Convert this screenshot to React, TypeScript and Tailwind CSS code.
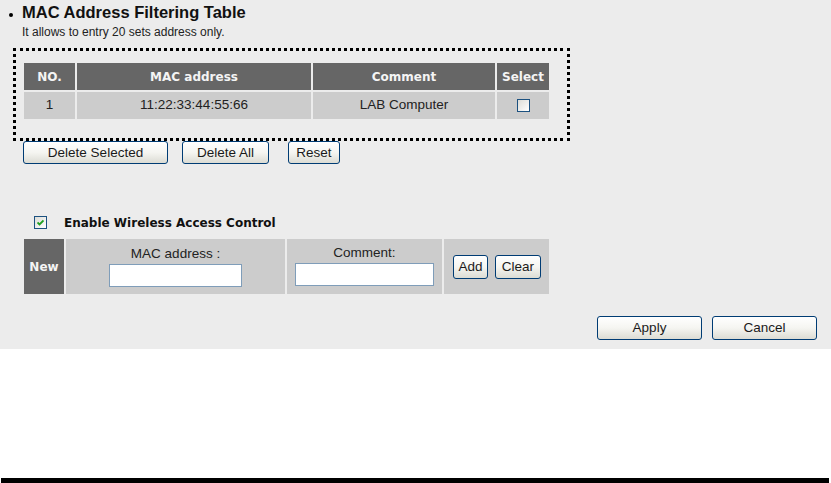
import React from "react";

const sans = "font-['Liberation_Sans',Arial,sans-serif]";
const bold = "font-['DejaVu_Sans',Verdana,sans-serif] font-bold";

function XpButton({ label, className }: { label: string; className: string }) {
  return (
    <button
      className={`${className} h-[23px] rounded-[3px] border border-[#003c74] bg-gradient-to-b from-white via-[#f5f5f1] to-[#dcdcd4] text-[13.5px] leading-none text-[#1a1a1a]`}
    >
      {label}
    </button>
  );
}

function XpCheck({ checked }: { checked?: boolean }) {
  return (
    <span className="flex h-[13px] w-[13px] items-center justify-center border border-[#1c5180] bg-gradient-to-br from-[#dcdcd7] to-white">
      {checked && (
        <svg width="7" height="7" viewBox="0 0 7 7">
          <path d="M0.5 3.5 L2.5 5.5 L6.5 1.5" stroke="#21a121" strokeWidth="1.8" fill="none" />
        </svg>
      )}
    </span>
  );
}

export default function App() {
  return (
    <div className={`${sans} flex h-[483px] w-[831px] flex-col bg-white text-black`}>
      <div className="h-[349px] bg-[#ececec] pt-[2px]">
        <div className="flex h-[20px] items-center pl-[9px]">
          <span className="mr-[9px] mt-[5px] h-[4px] w-[4px] rounded-full bg-black" />
          <span className="text-[16.5px] font-bold leading-none text-[#111]">MAC Address Filtering Table</span>
        </div>
        <div className="mt-[4px] pl-[22px] text-[12px] leading-[13px] text-[#222]">It allows to entry 20 sets address only.</div>

        <div className="ml-[13px] mt-[9px] h-[93px] w-[557px] border-[3px] border-dotted border-black pl-[8px] pt-[12px]">
          <div className="grid grid-cols-[51px_234px_182px_52px] grid-rows-[27px_27px] gap-[2px] text-center text-[13.5px] text-[#222]">
            {["NO.", "MAC address", "Comment", "Select"].map(h => (
              <div key={h} className={`${bold} flex items-center justify-center bg-[#666666] text-[12px] text-[#f4f4f4]`}>
                {h}
              </div>
            ))}
            <div className="flex items-center justify-center bg-[#cccccc]">1</div>
            <div className="flex items-center justify-center bg-[#cccccc]">11:22:33:44:55:66</div>
            <div className="flex items-center justify-center bg-[#cccccc]">LAB Computer</div>
            <div className="flex items-center justify-center bg-[#cccccc]">
              <XpCheck />
            </div>
          </div>
        </div>

        <div className="flex pl-[23px]">
          <XpButton label="Delete Selected" className="w-[145px]" />
          <XpButton label="Delete All" className="ml-[14px] w-[87px]" />
          <XpButton label="Reset" className="ml-[19px] w-[52px]" />
        </div>

        <div className="mt-[52px] flex h-[13px] items-center pl-[34px]">
          <XpCheck checked />
          <span className={`${bold} ml-[17px] text-[12px] text-[#111]`}>Enable Wireless Access Control</span>
        </div>

        <div className="ml-[24px] mt-[10px] grid h-[55px] w-[525px] grid-cols-[40px_219px_155px_105px] gap-[2px] text-[13.5px] text-[#222]">
          <div className={`${bold} flex items-center justify-center bg-[#666666] text-[12px] text-[#f4f4f4]`}>New</div>
          <div className="flex flex-col items-center bg-[#cccccc] pt-[7px]">
            <span className="leading-[16px]">MAC address :</span>
            <input className="mt-[2px] h-[23px] w-[133px] border border-[#7f9db9] bg-white" />
          </div>
          <div className="flex flex-col items-center bg-[#cccccc] pt-[6px]">
            <span className="leading-[16px]">Comment:</span>
            <input className="mt-[2px] h-[23px] w-[139px] border border-[#7f9db9] bg-white" />
          </div>
          <div className="flex items-center bg-[#cccccc] pl-[9px]">
            <XpButton label="Add" className="h-[24px] w-[35px]" />
            <XpButton label="Clear" className="ml-[7px] h-[24px] w-[46px]" />
          </div>
        </div>

        <div className="mt-[22px] flex justify-end gap-[10px] pr-[14px]">
          <XpButton label="Apply" className="h-[24px] w-[105px]" />
          <XpButton label="Cancel" className="h-[24px] w-[105px]" />
        </div>
      </div>
      <div className="ml-[1px] mt-auto h-[5px] w-[828px] bg-black" />
    </div>
  );
}
